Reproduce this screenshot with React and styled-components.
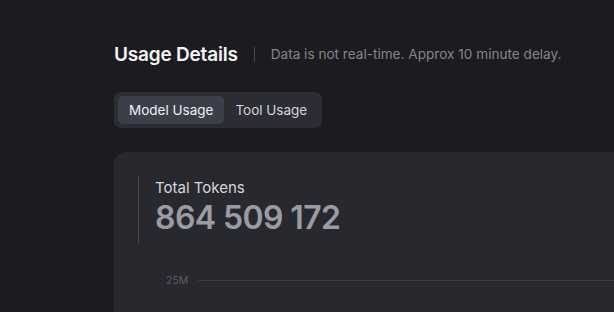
import React, { useState } from 'react'
import styled, { createGlobalStyle } from 'styled-components'

const GlobalStyle = createGlobalStyle`
    html, body {
        margin: 0;
        padding: 0;
        background: #1c1c20;
        font-family: Inter, "Noto Sans", sans-serif;
        overflow: hidden;
    }
`;

const tabs = ["Model Usage", "Tool Usage"];

export default function App() {
    const [active, setActive] = useState(0);

    return (
        <Page>
            <GlobalStyle />
            <Header>
                <Title>Usage Details</Title>
                <Divider />
                <Note>Data is not real-time. Approx 10 minute delay.</Note>
            </Header>

            <TabGroup>
                {tabs.map((t, i) => (
                    <Tab key={t} active={i === active} onClick={() => setActive(i)}>
                        {t}
                    </Tab>
                ))}
            </TabGroup>

            <Card>
                <Stat>
                    <StatLabel>Total Tokens</StatLabel>
                    <StatValue>864 509 172</StatValue>
                </Stat>
                <Chart>
                    <AxisLabel>25M</AxisLabel>
                    <GridLine />
                </Chart>
            </Card>
        </Page>
    );
}

const Page = styled.div`
    width: 614px;
    height: 312px;
    box-sizing: border-box;
    padding: 40px 0 0 114px;
    overflow: hidden;
`;

const Header = styled.div`
    display: flex;
    align-items: center;
    height: 28px;
`;

const Title = styled.h1`
    margin: 0;
    font-size: 19px;
    font-weight: 600;
    color: #f4f4f6;
    letter-spacing: -0.2px;
`;

const Divider = styled.span`
    width: 1px;
    height: 15px;
    background: #4a4a52;
    margin: 0 16px;
`;

const Note = styled.span`
    font-size: 13.6px;
    color: #85858c;
`;

const TabGroup = styled.div`
    display: inline-flex;
    margin-top: 24px;
    padding: 4px;
    background: #2b2c34;
    border-radius: 7px;
`;

const Tab = styled.button`
    border: none;
    font-family: inherit;
    font-size: 13.5px;
    height: 28px;
    padding: 0 11px;
    border-radius: 5px;
    cursor: pointer;
    color: ${p => p.active ? "#f0f0f3" : "#d4d4d9"};
    background: ${p => p.active ? "#3c3e4a" : "transparent"};
`;

const Card = styled.div`
    margin-top: 24px;
    width: 560px;
    height: 200px;
    background: #28292f;
    border-radius: 12px;
    padding: 24px 0 0 24px;
    box-sizing: border-box;
`;

const Stat = styled.div`
    border-left: 1px solid #45464e;
    padding: 2px 0 6px 16px;
    display: flex;
    flex-direction: column;
`;

const StatLabel = styled.div`
    font-size: 15px;
    color: #d6d6db;
    line-height: 20px;
`;

const StatValue = styled.div`
    font-size: 32px;
    font-weight: 600;
    color: #9b9ba4;
    line-height: 40px;
    letter-spacing: -0.6px;
`;

const Chart = styled.div`
    display: flex;
    align-items: center;
    margin-top: 30px;
    padding-left: 28px;
`;

const AxisLabel = styled.span`
    font-size: 10.5px;
    color: #5c5c64;
    width: 32px;
`;

const GridLine = styled.div`
    flex: 1;
    height: 1px;
    background: #3c3d45;
`;
